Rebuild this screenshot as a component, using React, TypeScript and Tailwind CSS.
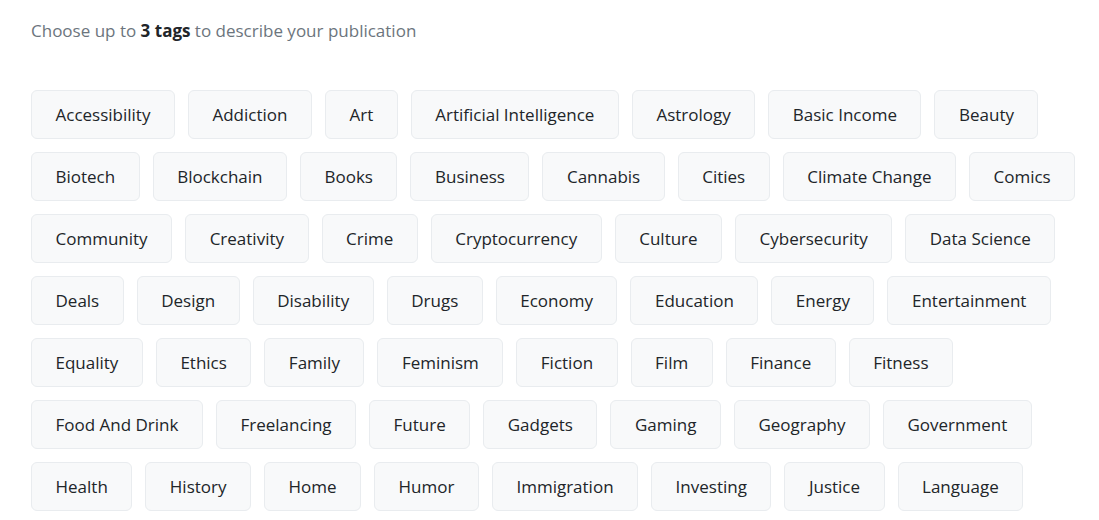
import React from "react";

const TAGS = [
  "Accessibility", "Addiction", "Art", "Artificial Intelligence", "Astrology", "Basic Income", "Beauty",
  "Biotech", "Blockchain", "Books", "Business", "Cannabis", "Cities", "Climate Change", "Comics",
  "Community", "Creativity", "Crime", "Cryptocurrency", "Culture", "Cybersecurity", "Data Science",
  "Deals", "Design", "Disability", "Drugs", "Economy", "Education", "Energy", "Entertainment",
  "Equality", "Ethics", "Family", "Feminism", "Fiction", "Film", "Finance", "Fitness",
  "Food And Drink", "Freelancing", "Future", "Gadgets", "Gaming", "Geography", "Government",
  "Health", "History", "Home", "Humor", "Immigration", "Investing", "Justice", "Language",
];

export default function App() {
  return (
    <div className="min-h-screen bg-white pl-[31px] pt-[19px] font-['Open_Sans',sans-serif] text-[17px]">
      {/* Heading */}
      <p className="leading-6 text-[#6c757d]">
        Choose up to <span className="font-bold text-[#212529]">3 tags</span> to describe your publication
      </p>

      {/* Tag list */}
      <div className="mt-[47px] flex w-[1060px] flex-wrap gap-[13px]">
        {TAGS.map((tag) => (
          <button
            key={tag}
            type="button"
            className="flex h-[49px] items-center rounded-md border border-[#e9ecef] bg-[#f8f9fa] px-[23.5px] text-[#212529]"
          >
            {tag}
          </button>
        ))}
      </div>
    </div>
  );
}
